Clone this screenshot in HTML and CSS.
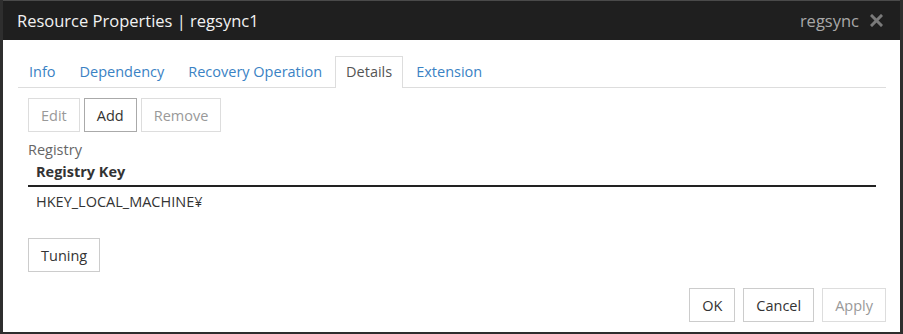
FILE: index.html
```html
<!DOCTYPE html>
<html lang="en">
<head>
    <meta charset="UTF-8">
    <title>Resource Properties</title>
    <link rel="stylesheet" href="styles.css">
</head>
<body>
    <div class="dialog">
        <!-- Title bar -->
        <div class="dialog-header">
            <span class="dialog-title">Resource Properties | regsync1</span>
            <span class="dialog-type">regsync</span>
            <span class="dialog-close">
                <svg width="13" height="13" viewBox="0 0 13 13">
                    <path d="M2 2 L11 11 M11 2 L2 11" stroke="#7a7a7a" stroke-width="3" stroke-linecap="square"/>
                </svg>
            </span>
        </div>

        <div class="dialog-body">
            <!-- Tabs -->
            <ul class="tabs">
                <li class="tab">Info</li>
                <li class="tab">Dependency</li>
                <li class="tab">Recovery Operation</li>
                <li class="tab active">Details</li>
                <li class="tab">Extension</li>
            </ul>

            <div class="toolbar">
                <button class="button" disabled>Edit</button>
                <button class="button button-active">Add</button>
                <button class="button" disabled>Remove</button>
            </div>

            <div class="group-label">Registry</div>
            <table class="grid">
                <thead>
                    <tr><th>Registry Key</th></tr>
                </thead>
                <tbody>
                    <tr><td>HKEY_LOCAL_MACHINE¥</td></tr>
                </tbody>
            </table>

            <div class="tuning-row">
                <button class="button">Tuning</button>
            </div>
        </div>

        <!-- Footer -->
        <div class="dialog-footer">
            <button class="button">OK</button>
            <button class="button">Cancel</button>
            <button class="button" disabled>Apply</button>
        </div>
    </div>
</body>
</html>
```

FILE: styles.css
```css
body {
    margin: 0;
    padding: 0;
    background-color: #333;
    font-family: "Open Sans", "Noto Sans", sans-serif;
    font-size: 14.5px;
    color: #333;
}

.dialog {
    width: 903px;
    height: 334px;
    box-sizing: border-box;
    border-left: 3px solid #2e2e2e;
    border-right: 3px solid #2e2e2e;
    border-bottom: 2px solid #2e2e2e;
    background-color: #fff;
    display: flex;
    flex-direction: column;
}

.dialog-header {
    height: 40px;
    box-sizing: border-box;
    border-top: 1px solid #4a4a4a;
    background-color: #1f1f1f;
    display: flex;
    align-items: center;
    padding: 0 17px 0 14px;
}

.dialog-title {
    color: #f2f2f2;
    font-size: 16.5px;
    flex: 1;
}

.dialog-type {
    color: #a8a8a8;
    font-size: 16.5px;
    margin-right: 11px;
}

.dialog-close {
    display: flex;
}

.dialog-body {
    flex: 1;
    padding: 16px 14px 0 15px;
}

.tabs {
    list-style: none;
    margin: 0;
    padding: 0;
    display: flex;
    border-bottom: 1px solid #ddd;
}

.tab {
    color: #3a82c4;
    padding: 0 10px;
    margin-right: 2px;
    height: 30px;
    line-height: 29px;
    border: 1px solid transparent;
    border-bottom: none;
    margin-bottom: -1px;
}

.tab.active {
    color: #555;
    background-color: #fff;
    border-color: #ddd;
    height: 31px;
}

.toolbar {
    display: flex;
    gap: 4px;
    margin: 10px 0 0 10px;
}

.button {
    font-family: "Open Sans", "Noto Sans", sans-serif;
    font-size: 14.5px;
    color: #333;
    background-color: #fff;
    border: 1px solid #ccc;
    height: 34px;
    padding: 0 12px;
    margin: 0;
}

.button-active {
    border-color: #aaa;
}

.button:disabled {
    color: #999;
    border-color: #ddd;
}

.group-label {
    color: #666;
    margin: 9px 0 0 10px;
    line-height: 18px;
}

.grid {
    margin-left: 10px;
    width: 848px;
    border-collapse: collapse;
}

.grid th {
    text-align: left;
    font-weight: bold;
    padding: 4px 8px 4px;
    border-bottom: 2px solid #222;
    line-height: 18px;
}

.grid td {
    padding: 6px 8px 4px;
    line-height: 18px;
}

.tuning-row {
    margin: 23px 0 0 10px;
}

.dialog-footer {
    display: flex;
    justify-content: flex-end;
    gap: 8px;
    padding: 0 14px 10px 0;
}
```
